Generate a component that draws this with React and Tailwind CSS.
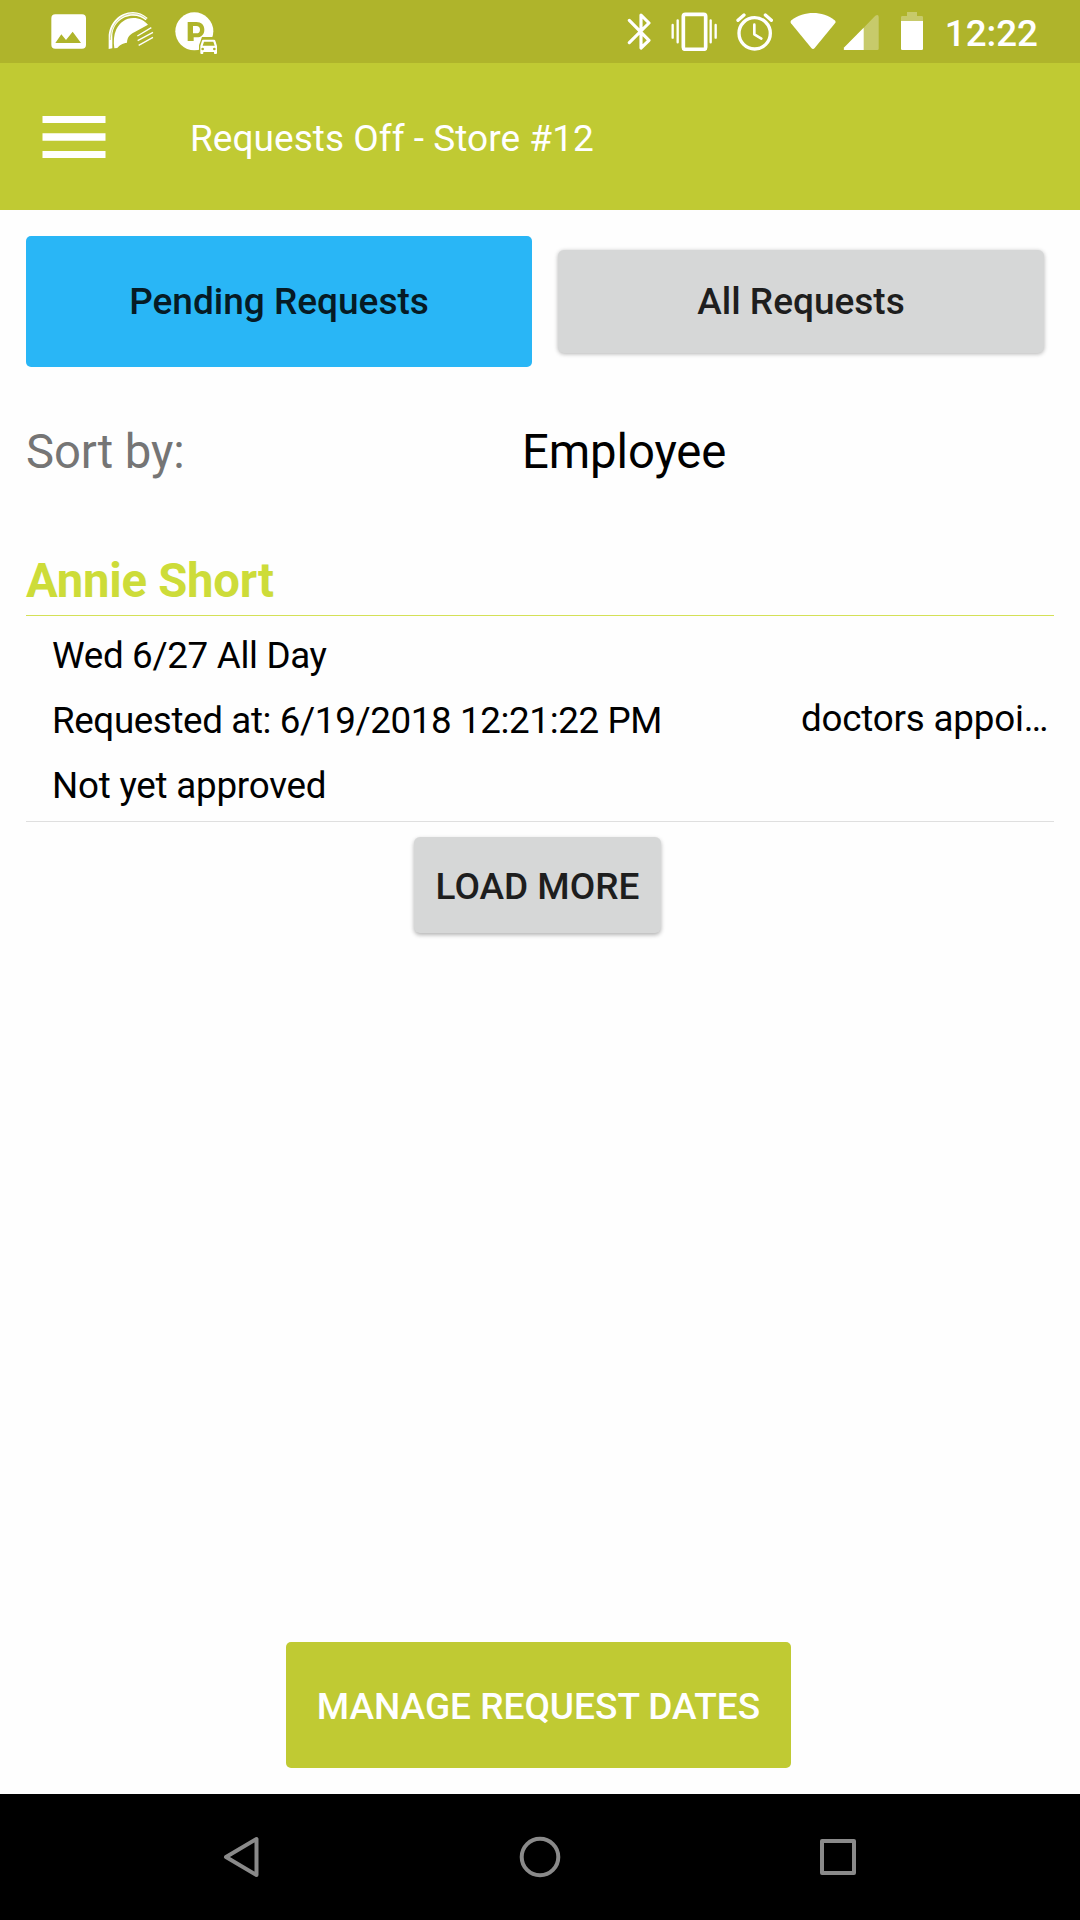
// src/App.jsx

const requests = [
  {
    employee: "Annie Short",
    when:     "Wed 6/27 All Day",
    created:  "Requested at: 6/19/2018 12:21:22 PM",
    status:   "Not yet approved",
    reason:   "doctors appoi…",
  },
];

function StatusBar() {
  return (
    <div className="h-[63px] bg-[#afb42b] flex items-start justify-between pl-[51px] pr-[42px] pt-3 text-white">
      <div className="flex items-start">
        {/* picture */}
        <svg className="w-[35px] h-[37px]" viewBox="0 0 105 111" fill="currentColor">
          <path fillRule="evenodd" d="M13 7h80a12 12 0 0 1 12 12v79a12 12 0 0 1-12 12H13a12 12 0 0 1-12-12V19A12 12 0 0 1 13 7zM13 93h77L65 59 45 84 31 67z" />
        </svg>
        {/* fan */}
        <svg className="w-[46px] h-[38px] ml-[22px]" viewBox="0 0 138 114" fill="none" stroke="currentColor">
          <path d="M2 111V76C2 34 34 0 75 0C91 0 106 7 119 18L113 25C103 16 91 11 75 11C40 11 13 38 13 74V109Z" fill="currentColor" stroke="none" />
          <path d="M7 84C7 38 37 6 75 5C92 5 106 12 117 22" stroke="#afb42b" strokeWidth="1.5" />
          <path d="M19 109C16 90 17 69 25 52C35 32 53 18 76 18C95 18 109 26 120 38L79 61C66 67 58 75 57 92C44 93 32 102 28 108Z" fill="currentColor" stroke="none" />
          <path d="M88 72L130 47M89 86L135 61M92 100L135 76" strokeWidth="4" />
        </svg>
        {/* parking */}
        <svg className="w-[44px] h-[43px] ml-[21px]" viewBox="0 0 132 129">
          <circle cx="58" cy="58" r="57" fill="#fff" />
          <path fillRule="evenodd" d="M38 30H64C79 30 88 39 88 53C88 67 79 76 65 76H56V87H38ZM54 42V64H64C71 64 75 60 75 53C75 46 71 42 64 42Z" fill="#afb42b" />
          <path d="M72 129V100L81 75H119L128 100V129Z" fill="#afb42b" />
          <path fillRule="evenodd" d="M85 83H117Q120 83 121 86L126 102V123Q126 126 123 126H119Q117 126 117 123V120H85V123Q85 126 82 126H79Q76 126 76 123V102L81 86Q82 83 85 83ZM87 89L83 101H119L115 89ZM83 107A4 4 0 1 0 83 115A4 4 0 1 0 83 107ZM118 107A4 4 0 1 0 118 115A4 4 0 1 0 118 107Z" fill="#fff" />
        </svg>
      </div>

      <div className="flex items-start">
        {/* bluetooth */}
        <svg className="w-[24px] h-[39px]" viewBox="0 0 72 117" fill="none" stroke="currentColor" strokeWidth="9.5" strokeLinejoin="round" strokeLinecap="round">
          <path d="M7 25L66 85L42 108V9L66 33L7 92" />
        </svg>
        {/* vibrate */}
        <svg className="w-[47px] h-[39px] ml-[20px]" viewBox="0 0 141 117" fill="none" stroke="currentColor" strokeWidth="8" strokeLinecap="round">
          <rect x="37" y="7" width="67" height="105" rx="6" strokeWidth="11" />
          <path d="M5 39V77M20 25V91M119 25V91M134 39V77" strokeWidth="7" />
        </svg>
        {/* alarm */}
        <svg className="w-[37px] h-[39px] ml-[18px]" viewBox="0 0 111 117" fill="none" stroke="currentColor" strokeWidth="10" strokeLinecap="round" strokeLinejoin="round">
          <circle cx="56" cy="64" r="47" />
          <path d="M6 25L24 9M88 9L106 25" />
          <path d="M55 38V67L76 80" strokeWidth="8" />
        </svg>
        {/* wifi */}
        <svg className="w-[46px] h-[39px] ml-[17px]" viewBox="0 0 138 117" fill="currentColor">
          <path d="M4 25C43-4 97-4 134 25Q139 29 135 34L74 108Q69 114 64 108L3 34Q0 29 4 25Z" />
        </svg>
        {/* cell signal */}
        <svg className="w-[36px] h-[39px] ml-[7px]" viewBox="0 0 108 117" fill="currentColor">
          <path d="M4 107L97 11Q107 6 107 15V110Q107 114 103 114H5Q0 114 4 107Z" opacity=".3" />
          <path d="M62 47V114H5Q0 114 4 106Z" />
        </svg>
        {/* battery */}
        <svg className="w-[23px] h-[39px] ml-[22px]" viewBox="0 0 69 117" fill="currentColor">
          <path d="M18 0H48V12H62Q66 12 66 16V27H0V16Q0 12 4 12H18Z" opacity=".3" />
          <path d="M0 27H66V110Q66 114 62 114H4Q0 114 0 110Z" />
        </svg>
        <span className="ml-[20.5px] mt-px text-[36.75px] leading-[41px] font-medium">12:22</span>
      </div>
    </div>
  );
}

function AppBar() {
  return (
    <header className="h-[147px] bg-[#c0ca33] flex items-center pl-[42px] text-white">
      <svg className="w-16 h-[42px] shrink-0" viewBox="0 0 64 42" fill="currentColor">
        <path d="M.5 0h63v7H.5zM.5 17.3h63v7.4H.5zM.5 35h63v7H.5z" />
      </svg>
      <h1 className="ml-[84px] pt-[4px] text-[37px] leading-[44px] tracking-[0.04px]">Requests Off - Store #12</h1>
    </header>
  );
}

function RequestCard({ request }) {
  return (
    <section>
      <h2 className="h-[70px] text-[47.25px] leading-[73px] tracking-[-0.25px] font-bold text-[#cddc39]">{request.employee}</h2>
      <div className="h-[207px] border-y border-t-[#d4e157] border-b-[#dfdfdf] pt-[7px] pl-[26px] flex justify-between text-[36.75px] leading-[65px] text-black">
        <div>
          <p className="tracking-[-0.32px]">{request.when}</p>
          <p className="tracking-[-0.38px]">{request.created}</p>
          <p className="tracking-[-0.23px]">{request.status}</p>
        </div>
        <p className="w-[253px] mt-[63px] h-[65px] whitespace-nowrap tracking-[-0.2px]">{request.reason}</p>
      </div>
    </section>
  );
}

function NavBar() {
  return (
    <nav className="h-[126px] bg-black flex items-center justify-between pl-[222px] pr-[223px] text-[#8a8a8a]">
      <svg className="w-[38px] h-[42px]" viewBox="0 0 38 42" fill="none" stroke="currentColor" strokeWidth="4" strokeLinejoin="round">
        <path d="M34.5 3v36L4 21z" />
      </svg>
      <svg className="w-[42px] h-[42px]" viewBox="0 0 42 42" fill="none" stroke="currentColor" strokeWidth="4">
        <circle cx="21" cy="21" r="18.3" />
      </svg>
      <svg className="w-[38px] h-[38px]" viewBox="0 0 38 38" fill="none" stroke="currentColor" strokeWidth="4" strokeLinejoin="round">
        <path d="M3 3h32v32H3z" />
      </svg>
    </nav>
  );
}

export default function App() {
  return (
    <div className="w-[1080px] h-[1920px] flex flex-col bg-[#fefefe] font-[Roboto,sans-serif] overflow-hidden">
      <StatusBar />
      <AppBar />

      <main className="flex-1 flex flex-col px-[26px] pt-[26px]">
        <div className="flex items-center gap-[26px]">
          <button className="w-[506px] h-[131px] rounded-[5px] bg-[#29b6f6] text-[37px] font-medium text-[#061b25]">
            Pending Requests
          </button>
          <button className="w-[486px] h-[103px] rounded-[6px] bg-[#d6d7d7] text-[37px] font-medium text-[#1e1e1e] shadow-[0_1px_4px_rgba(0,0,0,0.3)]">
            All Requests
          </button>
        </div>

        <div className="mt-[50px] h-[70px] flex text-[47.25px] leading-[71px] tracking-[-0.1px]">
          <span className="w-[496px] text-[#757575]">Sort by:</span>
          <span className="text-black">Employee</span>
        </div>

        <div className="mt-[58px]">
          {requests.map(r => <RequestCard key={r.created} request={r} />)}
        </div>

        <button className="w-[247px] h-24 mt-[15px] ml-[388px] pt-[3px] rounded-[6px] bg-[#d6d7d7] text-[37px] font-medium text-[#1e1e1e] shadow-[0_2px_4px_rgba(0,0,0,0.3)]">
          LOAD MORE
        </button>

        <button className="w-[505px] h-[126px] mt-auto mb-[26px] ml-[260px] pt-[3px] rounded-[5px] bg-[#c0ca33] text-[37px] font-medium text-white">
          MANAGE REQUEST DATES
        </button>
      </main>

      <NavBar />
    </div>
  );
}
